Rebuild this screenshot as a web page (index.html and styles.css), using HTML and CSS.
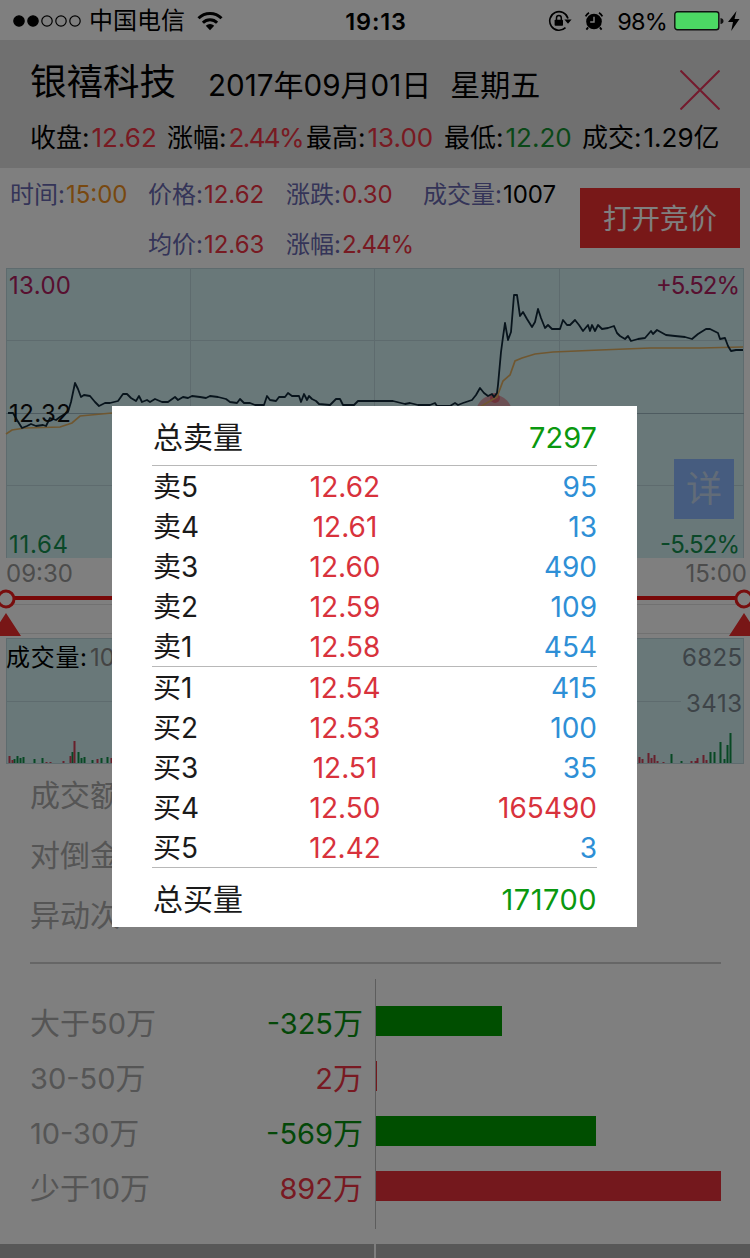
FILE: index.html
```html
<!DOCTYPE html>
<html lang="zh-CN">
<head>
<meta charset="utf-8">
<title>银禧科技</title>
<link rel="stylesheet" href="styles.css">
</head>
<body>
<div class="screen">
  <header class="status">
    <div class="status-left">
      <svg width="70" height="14" viewBox="0 0 70 14"><g stroke="#000" stroke-width="1.2"><circle cx="7" cy="7" r="5.2"/><circle cx="21" cy="7" r="5.2"/><g fill="none"><circle cx="35" cy="7" r="5.2"/><circle cx="49" cy="7" r="5.2"/><circle cx="63" cy="7" r="5.2"/></g></g></svg>
      <span class="carrier">中国电信</span>
      <svg width="26" height="20" viewBox="0 0 26 20"><g fill="none" stroke="#000" stroke-width="3"><path d="M1.5 7.3A16.3 16.3 0 0 1 24.5 7.3"/><path d="M5.9 11.7A10 10 0 0 1 20.1 11.7"/></g><path d="M13 19.3L8.8 14.8A6 6 0 0 1 17.2 14.8Z"/></svg>
    </div>
    <span class="clock">19:13</span>
    <div class="status-right">
      <svg width="24" height="22" viewBox="0 0 24 22"><path d="M17.5 17.6A9.3 9.3 0 1 1 20 8.5" fill="none" stroke="#000" stroke-width="1.6"/><path d="M16.4 9.5H23.6L20 13.8Z"/><rect x="6.6" y="9.8" width="8.4" height="6" rx=".8"/><path d="M8.5 10V8a2.4 2.4 0 0 1 4.8 0v2" fill="none" stroke="#000" stroke-width="1.5"/></svg>
      <svg width="20" height="20" viewBox="0 0 22 22"><circle cx="11" cy="11.6" r="8.6"/><path d="M4.6 18l-2 2.4M17.4 18l2 2.4M1.8 6A10 10 0 0 1 5.5 2M20.2 6A10 10 0 0 0 16.5 2" fill="none" stroke="#000" stroke-width="2"/><path d="M11 6.2v5.8H6.8" fill="none" stroke="#fff" stroke-width="1.6"/></svg>
      <span class="percent">98%</span>
      <svg class="battery" width="50" height="20" viewBox="0 0 50 20"><rect x=".8" y=".8" width="44" height="18" rx="2.5" fill="#4cd964" stroke="#111" stroke-width="1.4"/><path d="M46.5 7q3 .5 3 3t-3 3z" fill="#111"/></svg>
      <svg width="12" height="20" viewBox="0 0 12 20"><path d="M8.5 0L0 11H5L3.2 20L11.5 8H6.5Z"/></svg>
    </div>
  </header>

  <section class="heading">
    <div class="title-row">
      <h1>银禧科技</h1>
      <p class="date"><b>2017</b>年<b>09</b>月<b>01</b>日<span class="weekday">星期五</span></p>
      <svg class="close" width="40" height="40" viewBox="0 0 40 40"><path d="M.5 .5L39.5 39.5M39.5 .5L.5 39.5" stroke="#e8345a" stroke-width="2"/></svg>
    </div>
    <div class="summary">
      <span>收盘:<b class="up">12.62</b></span><span>涨幅:<b class="up rate">2.44%</b></span><span>最高:<b class="up">13.00</b></span><span>最低:<b class="down">12.20</b></span><span>成交:<b>1.29</b>亿</span>
    </div>
  </section>

  <section class="info">
    <div class="info-grid">
      <span>时间:<b class="time">15:00</b></span><span>价格:<b class="up">12.62</b></span><span>涨跌:<b class="up">0.30</b></span><span>成交量:<b class="ink">1007</b></span>
      <span></span><span>均价:<b class="up">12.63</b></span><span>涨幅:<b class="up rate">2.44%</b></span>
    </div>
    <div class="open-button">打开竞价</div>
  </section>

  <svg class="price-chart" width="750" height="290" viewBox="0 268 750 290">
    <rect x="6" y="268" width="738" height="291" fill="#d2f0f3"/>
    <path d="M6.5 268V558M190.5 268V558M374.5 268V558M559.5 268V558M743.5 268V558M6 268.5H744M6 340.5H744M6 485.5H744" stroke="#bcd6dc" fill="none"/>
    <path d="M6 413.5H744" stroke="#9cb6c0"/>
    <circle cx="494" cy="413" r="18" fill="#e05060" opacity=".5"/><circle cx="495" cy="398" r="5" fill="#e04050" opacity=".6"/>
    <polyline class="average" points="6,434 12,430 25,428 60,427 72,423 80,416 112,413 300,411 430,410 480,407 497,397 503,381 510,375 515,361 522,358 535,354 553,352 600,350 650,348 700,348 743,347"/>
    <polyline class="price" points="8,413 13,413 17,420 22,428 27,426 31,424 36,426 43,425 46,426 50,418 56,420 60,417 68,412 71,402 75,383 78,389 81,397 84,395 90,396 95,402 99,406 105,403 110,403 118,401 123,394 127,394 131,398 136,401 139,396 142,402 147,400 150,402 155,399 162,402 168,402 175,397 178,400 183,397 188,398 192,396 200,397 206,398 210,396 218,397 226,399 230,402 237,403 240,399 244,403 250,403 255,405 264,405 267,396 270,400 276,401 279,397 285,397 288,393 292,396 299,396 301,402 304,394 307,400 309,396 312,399 316,401 319,404 330,405 336,399 340,399 343,405 354,405 358,401 375,401 393,401 405,404 410,403 418,405 430,405 435,403 437,406 450,406 455,403 458,405 463,403 472,400 476,395 480,388 484,393 488,396 492,394 494,397 497,393 498,385 501,352 503,337 505,323 508,340 511,332 514,295 517,295 520,316 523,312 527,319 532,327 535,322 538,309 541,318 545,328 548,325 552,329 560,329 563,320 567,325 570,325 575,320 579,325 583,331 588,325 590,331 592,325 595,331 598,325 602,329 608,328 614,326 617,333 620,336 625,339 628,336 631,341 638,339 645,338 651,331 653,334 657,330 666,335 675,336 685,337 692,339 698,334 706,329 710,329 718,333 720,339 725,338 728,346 731,351 736,350 743,350"/>
    <g class="axis">
      <text x="9" y="294" textLength="62" fill="#b02060">13.00</text>
      <text x="9" y="422" textLength="62" fill="#111">12.32</text>
      <text x="9" y="553" textLength="59" fill="#159050">11.64</text>
      <text x="656" y="294" textLength="84" fill="#b02060">+5.52%</text>
      <text x="660" y="553" textLength="80" fill="#159050">-5.52%</text>
    </g>
    <rect x="674" y="459" width="60" height="60" fill="#8cb9ff"/>
    <text class="detail" x="686" y="502">详</text>
  </svg>

  <div class="times"><b>09:30</b><b>15:00</b></div>

  <svg class="slider" width="750" height="50" viewBox="0 588 750 50">
    <path d="M0 604.5H750M0 633.5H750" stroke="#e2e2e2"/>
    <path d="M6 598H744" stroke="#f01010" stroke-width="4"/>
    <g fill="#fff" stroke="#f01c1c" stroke-width="3"><circle cx="6" cy="599" r="8"/><circle cx="744" cy="599" r="8"/></g>
    <path d="M6 613L21 636H-9ZM744 613L759 636H729Z" fill="#f02c2c"/>
  </svg>

  <svg class="volume-chart" width="750" height="126" viewBox="0 638 750 126">
    <rect x="6" y="638" width="738" height="126" fill="#d2f0f3"/>
    <path d="M6.5 638V764M743.5 638V764M6 638.5H744M6 701.5H681M6 763.5H744" stroke="#bcd6dc"/>
    <path class="fall" d="M14.5 759V763M17.5 756V763M20.5 758V763M23.5 757V763M34.5 759V763M42.5 758V763M72.5 752V763M78.5 752V763M81.5 758V763M84.5 757V763M92.5 760V763M101.5 758V763M107.5 757V763M671.5 754V763M681.5 761V763M710.5 752V763M714.5 752V763M720.5 742V763M724.5 759V763M727.5 745V763M730.5 733V763"/>
    <path class="rise" d="M9.5 756V763M12.5 760V763M46.5 762V763M50.5 762V763M63.5 761V763M70.5 756V763M74.5 741V763M97.5 759V763M111.5 758V763M639.5 757V763M642.5 759V763M648.5 753V763M651.5 758V763M654.5 755V763M657.5 761V763M663.5 762V763M691.5 761V763M695.5 761V763M697.5 758V763M703.5 755V763M706.5 760V763"/>
    <g class="axis">
      <text x="6" y="666" textLength="81">成交量:</text>
      <text x="90" y="666" fill="#888">1007</text>
      <text x="682" y="666" textLength="60" fill="#7d8890">6825</text>
      <text x="686" y="712" textLength="56" fill="#7d8890">3413</text>
    </g>
  </svg>

  <ul class="stats"><li>成交额</li><li>对倒金</li><li>异动次</li></ul>

  <section class="flows">
    <div class="flow-text">
      <p><span>大于<b>50</b>万</span><span class="fallen"><b>-325</b>万</span></p>
      <p><span><b>30-50</b>万</span><span class="up"><b>2</b>万</span></p>
      <p><span><b>10-30</b>万</span><span class="fallen"><b>-569</b>万</span></p>
      <p><span>少于<b>10</b>万</span><span class="up"><b>892</b>万</span></p>
    </div>
    <div class="flow-bars">
      <i class="bar-out" style="width:126px"></i><i class="bar-in" style="width:1px"></i><i class="bar-out" style="width:220px"></i><i class="bar-in" style="width:345px"></i>
    </div>
  </section>
  <footer class="tabs"><i></i><i></i></footer>

  <div class="dim">
    <div class="quotes">
      <div class="total"><span>总卖量</span><b>7297</b></div>
      <div class="levels">
        <p><span>卖<b>5</b></span><b>12.62</b><b>95</b></p>
        <p><span>卖<b>4</b></span><b>12.61</b><b>13</b></p>
        <p><span>卖<b>3</b></span><b>12.60</b><b>490</b></p>
        <p><span>卖<b>2</b></span><b>12.59</b><b>109</b></p>
        <p><span>卖<b>1</b></span><b>12.58</b><b>454</b></p>
      </div>
      <div class="levels">
        <p><span>买<b>1</b></span><b>12.54</b><b>415</b></p>
        <p><span>买<b>2</b></span><b>12.53</b><b>100</b></p>
        <p><span>买<b>3</b></span><b>12.51</b><b>35</b></p>
        <p><span>买<b>4</b></span><b>12.50</b><b class="large">165490</b></p>
        <p><span>买<b>5</b></span><b>12.42</b><b>3</b></p>
      </div>
      <div class="total last"><span>总买量</span><b>171700</b></div>
    </div>
  </div>
</div>
</body>
</html>
```
FILE: styles.css
```css
* { box-sizing: border-box; margin: 0; padding: 0; }
body { background: #fff; font-family: Inter, "Noto Sans CJK SC", sans-serif; color: #000; }
b { font-weight: 400; }
svg { display: block; flex: none; }
.screen { position: relative; width: 750px; height: 1258px; overflow: hidden; white-space: nowrap; }

.status { height: 40px; display: grid; grid-template-columns: 1fr auto 1fr; align-items: center; padding: 0 10px 0 12px; }
.status-left, .status-right { display: flex; align-items: center; }
.carrier { font-size: 24px; line-height: 40px; margin: 1px 12px 0 7px; }
.clock { font-size: 23.5px; font-weight: 600; letter-spacing: .8px; padding-top: 1px; }
.status-right { justify-content: flex-end; }
.percent { font-size: 23.5px; margin: 1px 7px 0 13px; letter-spacing: -.8px; }
.status-right svg + svg { margin-left: 12px; }
.status-right .battery { position: relative; z-index: 3; margin-left: 0; }
.status-right .battery + svg { margin-left: 4px; }

.heading { height: 128px; background: #e0e0e0; padding: 0 29px 0 30px; }
.title-row { height: 80px; display: flex; align-items: center; }
h1 { font-size: 36.5px; font-weight: 400; line-height: 80px; width: 178px; padding-top: 3px; }
.date { font-size: 30px; line-height: 60px; padding-top: 10px; }
.date b { font-size: 29.6px; }
.weekday { margin-left: 19px; }
.close { margin: 19px 1px 0 auto; }
.summary { display: grid; grid-template-columns: 137px 139px 138px 138px 139px; font-size: 26px; line-height: 35px; }
.summary b { margin-left: 2px; }
.summary .rate { letter-spacing: -1.6px; }
.up { color: #f03444; }
.down { color: #159030; }

.info { height: 100px; display: flex; justify-content: space-between; padding-right: 10px; }
.info-grid { display: grid; grid-template-columns: 138px 138px 137px 150px; grid-template-rows: 50px 50px; padding-left: 10px; font-size: 24px; line-height: 54px; color: #6868b0; }
.info-grid b { margin-left: 1px; }
.info-grid .rate { letter-spacing: -1px; }
.time { color: #f09020; }
.ink { color: #000; }
.open-button { width: 160px; height: 60px; margin-top: 20px; background: #f03030; color: #fff; font-size: 28.5px; line-height: 62px; text-align: center; }

.average { fill: none; stroke: #e0ae60; stroke-width: 1.7; }
.price { fill: none; stroke: #102838; stroke-width: 1.8; stroke-linejoin: round; }
.axis { font-size: 24px; }
.detail { font-size: 36px; fill: #c4d8f0; }
.times { height: 30px; display: flex; justify-content: space-between; padding: 0 3px 0 6px; font-size: 24px; line-height: 31px; color: #999; }
.fall { stroke: #109048; stroke-width: 2; }
.rise { stroke: #d04058; stroke-width: 2; }

.stats { height: 200px; list-style: none; margin: 0 29px 0 30px; padding-top: 1px; border-bottom: 2px solid #ccc; font-size: 30px; line-height: 60px; color: #aaa; }
.flows { height: 280px; display: flex; padding: 15px 0 0 30px; }
.flow-text { width: 333px; padding-top: 17px; font-size: 30px; line-height: 55px; color: #aaa; }
.flow-text b { font-size: 29px; }
.flow-text p { display: flex; justify-content: space-between; }
.fallen { color: #089010; }
.flow-bars { height: 250px; margin-left: 12px; border-left: 1px solid #bbb; padding-top: 27px; display: grid; grid-auto-rows: 30px; row-gap: 25px; }
.bar-out { background: #009c00; }
.bar-in { background: #e8303a; }
.tabs { height: 14px; display: flex; gap: 2px; }
.tabs i { flex: 1; background: #b0b0b0; }

.dim { position: absolute; inset: 0; z-index: 2; background: rgba(0, 0, 0, .5); }
.quotes { position: absolute; left: 112px; top: 406px; width: 525px; height: 521px; padding: 0 40px; background: #fff; color: #1a1a1a; }
.total { height: 60px; display: flex; justify-content: space-between; border-bottom: 1px solid #b8b8b8; font-size: 30px; line-height: 63px; }
.total > span { padding-left: 1px; }
.total b { color: #0a980f; font-size: 29px; }
.total.last { border: 0; }
.total.last b { letter-spacing: .5px; }
.levels { height: 201px; border-bottom: 1px solid #b8b8b8; font-size: 28px; line-height: 43px; }
.levels p { height: 40px; display: grid; grid-template-columns: 136px 114px 1fr; }
.levels p > span { padding-left: 1px; }
.levels p > b { text-align: center; color: #d8323c; }
.levels p > b:last-child { text-align: right; color: #2e8fd6; }
.levels p > .large:last-child { color: #d8323c; }
```
